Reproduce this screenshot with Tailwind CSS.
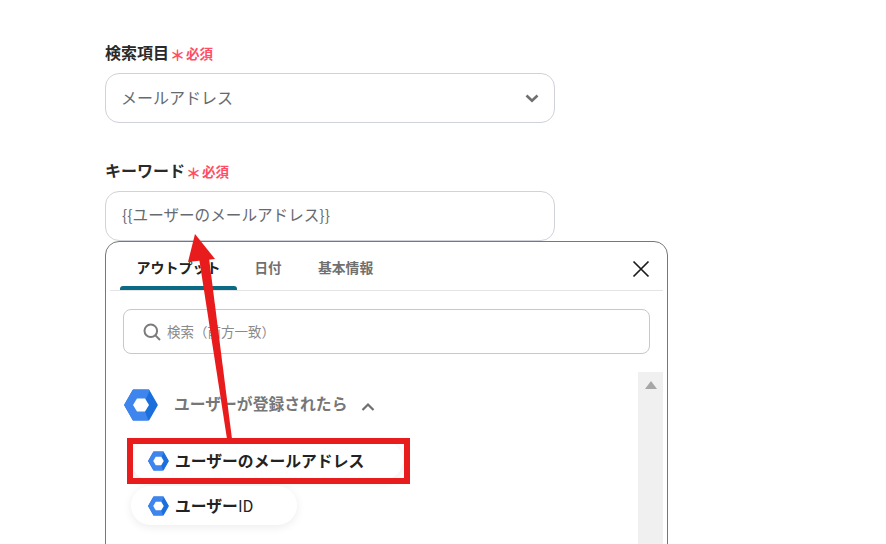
<!DOCTYPE html>
<html lang="ja">
<head>
<meta charset="utf-8">
<script src="https://cdn.jsdelivr.net/npm/@tailwindcss/browser@4"></script>
</head>
<body class="bg-white">
<div class="relative w-[886px] h-[544px] overflow-hidden bg-white font-['Noto_Sans_CJK_JP','Noto_Sans',sans-serif] text-[#2a2a2a]">
  <div class="pl-[105px] pt-[41px]">
    <div class="flex items-center h-[24px]">
      <span class="text-[16px] font-bold leading-[24px] -mt-[2px]">検索項目</span>
      <span class="ml-[1px] text-[#ff4d64] text-[15px] font-bold leading-[24px] mt-[3px]">＊</span>
      <span class="ml-[1px] text-[#ff4d64] text-[13.5px] font-bold leading-[24px] -mt-[1px]">必須</span>
    </div>
    <div class="mt-[8px] w-[450px] h-[50px] rounded-[14px] border border-[#cfd2d8] flex items-center justify-between pl-[16px] pr-[14px]">
      <span class="text-[16px] text-[#666a70] -mt-[2px] -ml-[1px]">メールアドレス</span>
      <svg width="16" height="16" viewBox="0 0 16 16" fill="none" stroke="#6f6f6f" stroke-width="2.6"><path d="M2.5 5.5 8 10.8 13.5 5.5"/></svg>
    </div>
    <div class="mt-[36px] flex items-center h-[24px]">
      <span class="text-[16px] font-bold leading-[24px] -mt-[2px]">キーワード</span>
      <span class="ml-[1px] text-[#ff4d64] text-[15px] font-bold leading-[24px] mt-[3px]">＊</span>
      <span class="ml-[1px] text-[#ff4d64] text-[13.5px] font-bold leading-[24px]">必須</span>
    </div>
    <div class="mt-[8px] w-[450px] h-[50px] rounded-[14px] border border-[#cfd2d8] flex items-center pl-[16px]">
      <span class="text-[15.6px] text-[#666a70] -mt-[3px]">{{ユーザーのメールアドレス}}</span>
    </div>
    <div class="w-[563px] h-[340px] rounded-[14px] border border-[#777777] bg-white relative">
      <div class="mx-[4px] h-[49px] border-b border-[#e4e4e4] flex items-stretch pl-[10px] pr-[13px]">
        <div class="relative w-[117px] flex items-center justify-center text-[14px] font-bold text-[#222] pt-[2px]">アウトプット
          <span class="absolute left-0 right-0 bottom-0 h-[4px] rounded-t-[3px] bg-[#0b6b84]"></span>
        </div>
        <div class="ml-[17px] w-[28px] flex items-center justify-center text-[13.5px] font-bold text-[#707070] pt-[2px]">日付</div>
        <div class="ml-[36px] flex items-center text-[13.8px] font-bold text-[#707070] pt-[2px]">基本情報</div>
        <svg class="ml-auto self-center mt-[6px]" width="18" height="18" viewBox="0 0 18 18" fill="none" stroke="#1c1c1c" stroke-width="1.7"><path d="M1.5 1.5 16.5 16.5M16.5 1.5 1.5 16.5"/></svg>
      </div>
      <div class="mt-[18px] ml-[17px] w-[527px] h-[45px] rounded-[8px] border border-[#c8c8c8] flex items-center pl-[19px] gap-[6px]">
        <svg width="18" height="18" viewBox="0 0 18 18" fill="none" stroke="#7b7b7b" stroke-width="2"><circle cx="7.8" cy="7.8" r="6.3"/><path d="M12.4 12.4 17 17"/></svg>
        <span class="text-[13.5px] text-[#8a8a8a]">検索（前方一致）</span>
      </div>
      <div class="mt-[18px] flex">
        <div class="w-[532px]">
          <div class="mt-[17px] ml-[18px] flex items-center h-[32px]">
            <svg width="34" height="32" viewBox="0 0 34 32" stroke-linejoin="round"><path d="M9.5 1.5H24.5L32.8 16 24.5 30.5H9.5L1.2 16Z" fill="#1a6fdc" stroke="#1a6fdc" stroke-width="2"/><path d="M9.5 1.5H24.5L21 9.5H13L9 16 13 22.5H20L23 30.5H9.5L1.2 16Z" fill="#3f85ee" stroke="#3f85ee" stroke-width="2"/><path d="M13 9.5H21L25 16 21 22.5H13L9 16Z" fill="#fff"/></svg>
            <span class="ml-[16px] text-[15.8px] font-bold text-[#777777] -mt-[2px]">ユーザーが登録されたら</span>
            <svg class="ml-[14px] mt-[4px]" width="14" height="10" viewBox="0 0 14 10" fill="none" stroke="#6f6f6f" stroke-width="2.2"><path d="M1.5 8 7 2.5 12.5 8"/></svg>
          </div>
          <div class="mt-[20px] ml-[25px] flex flex-col gap-[6px] items-start">
            <div class="w-[272px] h-[39px] rounded-full bg-white shadow-[0_2px_10px_rgba(0,0,0,0.08)] flex items-center pl-[17px] gap-[6px]">
              <svg width="21" height="20" viewBox="0 0 34 32" stroke-linejoin="round"><path d="M9.5 1.5H24.5L32.8 16 24.5 30.5H9.5L1.2 16Z" fill="#1a6fdc" stroke="#1a6fdc" stroke-width="2"/><path d="M9.5 1.5H24.5L21 9H13L9 16 13 23H20L23 30.5H9.5L1.2 16Z" fill="#3f85ee" stroke="#3f85ee" stroke-width="2"/><path d="M12.5 9H21.5L25.5 16 21.5 23H12.5L8.5 16Z" fill="#fff"/></svg>
              <span class="text-[15.8px] font-bold text-[#222]">ユーザーのメールアドレス</span>
            </div>
            <div class="w-[166px] h-[39px] rounded-full bg-white shadow-[0_2px_10px_rgba(0,0,0,0.08)] flex items-center pl-[17px] gap-[6px]">
              <svg width="21" height="20" viewBox="0 0 34 32" stroke-linejoin="round"><path d="M9.5 1.5H24.5L32.8 16 24.5 30.5H9.5L1.2 16Z" fill="#1a6fdc" stroke="#1a6fdc" stroke-width="2"/><path d="M9.5 1.5H24.5L21 9H13L9 16 13 23H20L23 30.5H9.5L1.2 16Z" fill="#3f85ee" stroke="#3f85ee" stroke-width="2"/><path d="M12.5 9H21.5L25.5 16 21.5 23H12.5L8.5 16Z" fill="#fff"/></svg>
              <span class="text-[15.8px] font-bold text-[#222]">ユーザー<span class="font-normal">ID</span></span>
            </div>
          </div>
        </div>
        <div class="w-[25px] h-[240px] bg-[#f0f0f0] flex justify-center pt-[9px]">
          <svg width="12" height="8" viewBox="0 0 12 8"><path d="M6 0 12 8H0Z" fill="#a6a6a6"/></svg>
        </div>
      </div>
    </div>
  </div>
  <div class="absolute left-[127px] top-[438px] w-[283px] h-[46px] border-[6px] border-[#e81c1c]"></div>
  <svg class="absolute left-0 top-0" width="886" height="544" viewBox="0 0 886 544"><path d="M199 258 209 258 232 439 227 439Z" fill="#e81c1c"/><path d="M195 234 215 259 188 262Z" fill="#e81c1c"/></svg>
</div>
</body>
</html>
